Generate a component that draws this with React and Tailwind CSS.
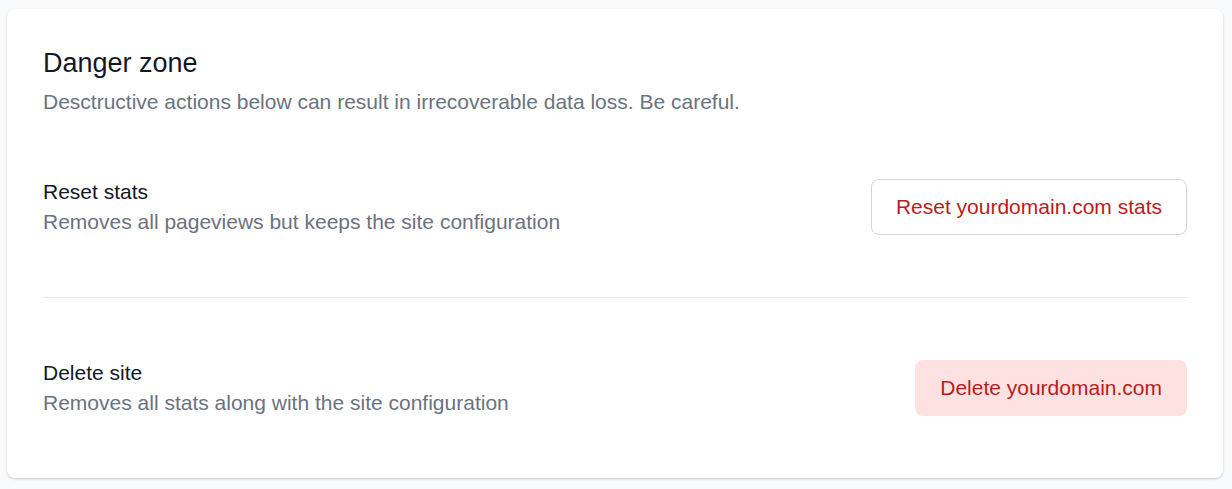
export default function App() {
  return (
    <div className="min-h-screen bg-[#f9fafb] pt-[9px] pl-[7px] pr-[9px] font-['Liberation_Sans',Arial,sans-serif]">
      <div className="bg-white rounded-lg shadow-[0_1px_3px_rgba(0,0,0,0.12),0_1px_2px_rgba(0,0,0,0.08)] pt-[36px] px-9 pb-[60px]">
        <h2 className="text-[27px] leading-[36px] text-[#111827]">Danger zone</h2>
        <p className="mt-[6px] text-[21px] leading-[30px] text-[#6b7280]">
          Desctructive actions below can result in irrecoverable data loss. Be careful.
        </p>

        <div className="mt-[60px] mb-[60px] flex items-center justify-between">
          <div>
            <p className="text-[21px] leading-[30px] text-[#111827]">Reset stats</p>
            <p className="text-[21px] leading-[30px] text-[#6b7280]">Removes all pageviews but keeps the site configuration</p>
          </div>
          <button className="h-[56px] px-6 rounded-lg border border-[#d1d5db] bg-white text-[21px] text-[#b91c1c]">
            Reset yourdomain.com stats
          </button>
        </div>

        <div className="border-t border-[#e5e7eb]" />

        <div className="mt-[60px] flex items-center justify-between">
          <div>
            <p className="text-[21px] leading-[30px] text-[#111827]">Delete site</p>
            <p className="text-[21px] leading-[30px] text-[#6b7280]">Removes all stats along with the site configuration</p>
          </div>
          <button className="h-[56px] px-[25px] rounded-lg bg-[#fee2e2] text-[21px] text-[#b91c1c]">
            Delete yourdomain.com
          </button>
        </div>
      </div>
    </div>
  )
}
